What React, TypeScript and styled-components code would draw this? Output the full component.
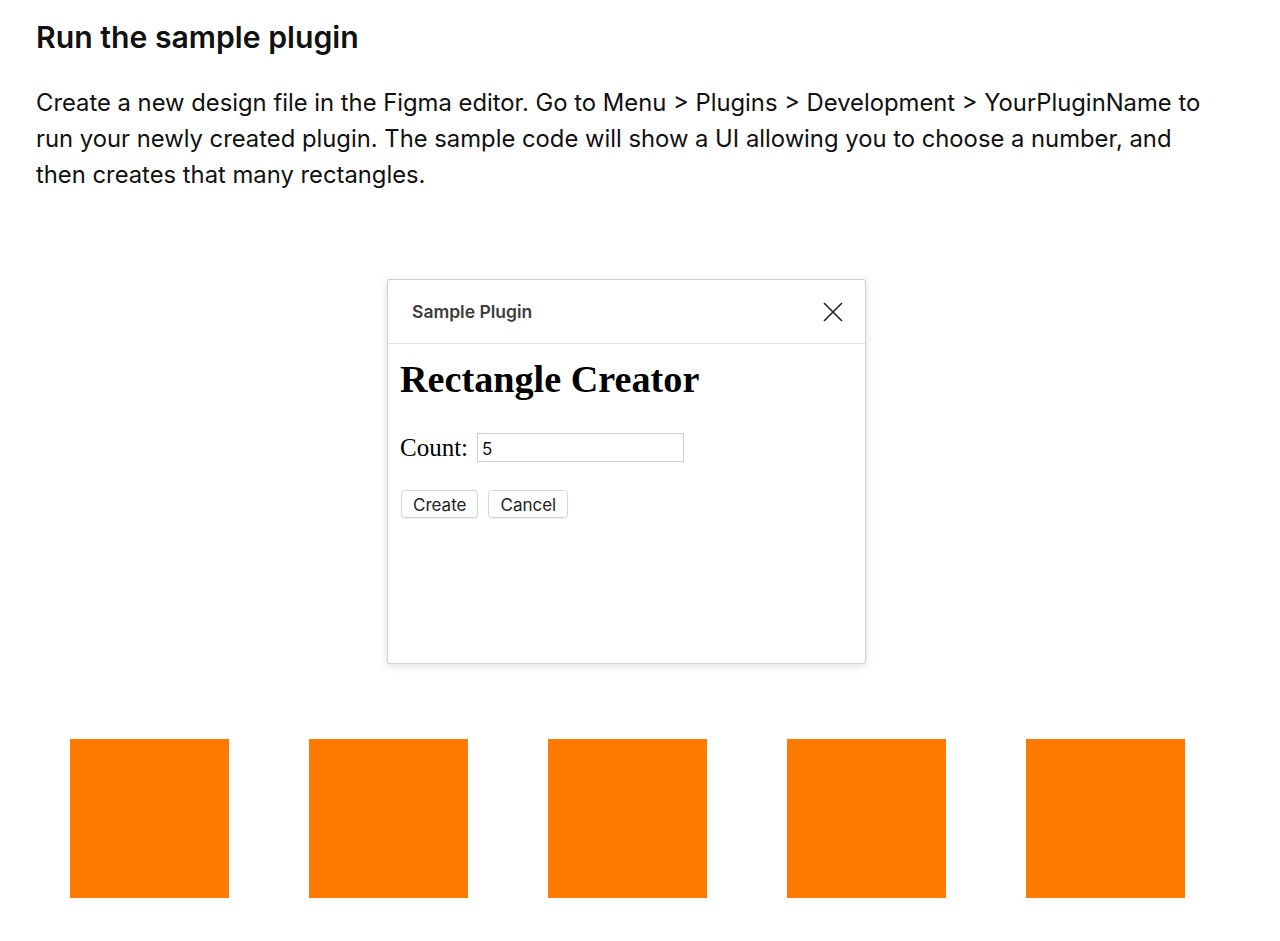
import React from "react";
import styled, { createGlobalStyle } from "styled-components";

const Global = createGlobalStyle`
  html, body { margin: 0; padding: 0; background: #ffffff; }
  body { font-family: Inter, "Noto Sans", sans-serif; color: #111111; }
`;

const Page = styled.main`
  width: 1183px;
  padding: 19px 36px 40px;
  display: flex;
  flex-direction: column;
`;

const Heading = styled.h2`
  margin: 0;
  font-size: 30.2px;
  line-height: 36px;
  font-weight: 600;
  color: #111;
`;

const Paragraph = styled.p`
  margin: 30px 0 0;
  font-size: 23.8px;
  line-height: 36px;
  font-weight: 400;
  color: #111;
`;

const Stage = styled.div`
  display: flex;
  justify-content: center;
  margin-top: 86px;
  padding-right: 2px;
`;

const Dialog = styled.section`
  width: 477px;
  height: 383px;
  border: 1px solid #d0d0d0;
  border-radius: 3px;
  background: #fff;
  box-shadow: 0 2px 10px rgba(0, 0, 0, 0.12), 0 0 1px rgba(0, 0, 0, 0.1);
  display: flex;
  flex-direction: column;
`;

const DialogHeader = styled.header`
  height: 63px;
  border-bottom: 1px solid #e3e3e3;
  display: flex;
  align-items: center;
  justify-content: space-between;
  padding: 0 21px 0 24px;
`;

const DialogTitle = styled.span`
  font-size: 17.5px;
  font-weight: 600;
  color: #3d3d3d;
`;

const CloseButton = styled.button`
  border: 0;
  background: none;
  padding: 0;
  width: 22px;
  height: 22px;
  display: flex;
  align-items: center;
  justify-content: center;
  cursor: pointer;
`;

const DialogBody = styled.div`
  padding: 12px 12px;
  font-family: "Liberation Serif", "Times New Roman", serif;
  display: flex;
  flex-direction: column;
  align-items: flex-start;
`;

const CreatorTitle = styled.h1`
  margin: 0;
  font-size: 38.2px;
  line-height: 46px;
  font-weight: 700;
  color: #000;
`;

const CountRow = styled.label`
  margin-top: 31px;
  display: flex;
  align-items: center;
  gap: 9px;
  font-size: 25px;
  color: #000;
`;

const CountInput = styled.input`
  width: 207px;
  height: 29px;
  box-sizing: border-box;
  border: 1px solid #cfcfcf;
  padding: 3px 4px 0;
  font-family: Inter, "Noto Sans", sans-serif;
  font-size: 17px;
  color: #111;
  outline: none;
`;

const ButtonRow = styled.div`
  margin-top: 28px;
  margin-left: 1px;
  display: flex;
  gap: 10px;
`;

const PlainButton = styled.button`
  height: 28px;
  padding: 1px 11px 0;
  border: 1px solid #d6d6d6;
  border-radius: 4px;
  background: #fff;
  box-shadow: 0 1px 1px rgba(0, 0, 0, 0.08);
  font-family: Inter, "Noto Sans", sans-serif;
  font-size: 17px;
  color: #222;
  cursor: pointer;
`;

const Rects = styled.div`
  margin-top: 75px;
  display: flex;
  justify-content: center;
  gap: 80px;
`;

const OrangeSquare = styled.div`
  width: 159px;
  height: 159px;
  background: #ff7a00;
`;

export default function App() {
  return (
    <>
      <Global />
      <Page>
        <Heading>Run the sample plugin</Heading>
        <Paragraph>
          Create a new design file in the Figma editor. Go to Menu &gt; Plugins &gt; Development &gt; YourPluginName to
          run your newly created plugin. The sample code will show a UI allowing you to choose a number, and
          then creates that many rectangles.
        </Paragraph>
        <Stage>
          <Dialog>
            <DialogHeader>
              <DialogTitle>Sample Plugin</DialogTitle>
              <CloseButton aria-label="Close">
                <svg width="20" height="20" viewBox="0 0 20 20">
                  <path d="M1 1 L19 19 M19 1 L1 19" stroke="#222" strokeWidth="1.6" fill="none" />
                </svg>
              </CloseButton>
            </DialogHeader>
            <DialogBody>
              <CreatorTitle>Rectangle Creator</CreatorTitle>
              <CountRow>
                Count: <CountInput defaultValue="5" />
              </CountRow>
              <ButtonRow>
                <PlainButton>Create</PlainButton>
                <PlainButton>Cancel</PlainButton>
              </ButtonRow>
            </DialogBody>
          </Dialog>
        </Stage>
        <Rects>
          {[0, 1, 2, 3, 4].map((i) => (
            <OrangeSquare key={i} />
          ))}
        </Rects>
      </Page>
    </>
  );
}
